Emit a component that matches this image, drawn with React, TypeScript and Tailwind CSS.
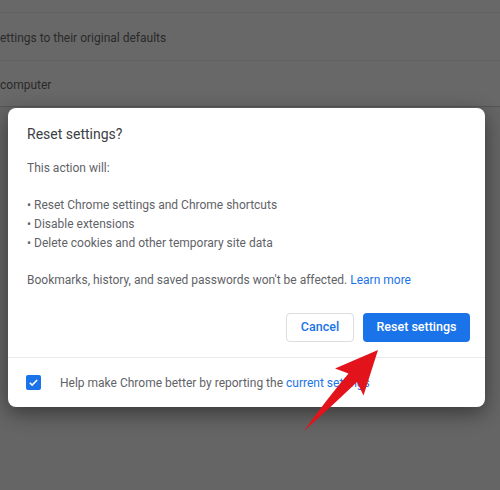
import React from "react";

/**
 * Reset settings dialog over a dimmed settings page
 */
export default function App() {
  return (
    <div
      className="relative w-[500px] h-[490px] overflow-hidden bg-[#656565]"
      style={{ fontFamily: "Roboto, 'Liberation Sans', sans-serif" }}
    >
      {/* Dimmed page behind */}
      <div className="bg-[#686868] border-b border-[#555555] text-[12px] text-[#2a2a2a]">
        <div className="h-[13px] border-b border-[#626262]" />
        <div className="h-[48px] flex items-center border-b border-[#626262] pt-[3px]">
          <span>ettings to their original defaults</span>
        </div>
        <div className="h-[45px] flex items-center pt-[2px]">
          <span>computer</span>
        </div>
      </div>

      {/* Dialog */}
      <div className="absolute left-[8px] top-[108px] w-[477px] bg-white rounded-[8px] shadow-[0_6px_20px_rgba(0,0,0,0.45)]">
        <div className="px-[19px] pt-[16px]">
          <h2 className="text-[14px] leading-[20px] text-[#3c4043]">Reset settings?</h2>
          <div className="mt-[15px] text-[12px] leading-[18px] text-[#5f6368]">
            <p>This action will:</p>
            <ul className="mt-[19px] space-y-[1px]">
              <li>• Reset Chrome settings and Chrome shortcuts</li>
              <li>• Disable extensions</li>
              <li>• Delete cookies and other temporary site data</li>
            </ul>
            <p className="mt-[19px]">
              Bookmarks, history, and saved passwords won't be affected.{" "}
              <span className="text-[#1a73e8]">Learn more</span>
            </p>
          </div>
          <div className="flex justify-end gap-[9px] mt-[24px] pb-[15px]">
            <button className="h-[29px] w-[68px] rounded-[4px] border border-[#dadce0] text-[12.5px] font-medium text-[#1a73e8]">
              Cancel
            </button>
            <button className="h-[29px] w-[107px] -mr-[4px] rounded-[4px] bg-[#1a73e8] text-[12.5px] font-medium text-white">
              Reset settings
            </button>
          </div>
        </div>
        <div className="border-t border-[#e8eaed] h-[50px] flex items-center px-[18px]">
          <span className="w-[15px] h-[15px] rounded-[2px] bg-[#1a73e8] flex items-center justify-center">
            <svg width="11" height="11" viewBox="0 0 24 24" fill="none" stroke="white" strokeWidth="3.5">
              <path d="M4 12.5l5 5L20 6.5" />
            </svg>
          </span>
          <span className="ml-[19px] text-[12px] text-[#5f6368]">
            Help make Chrome better by reporting the{" "}
            <span className="text-[#1a73e8]">current settings</span>
          </span>
        </div>
      </div>

      {/* Red arrow annotation */}
      <svg className="absolute left-0 top-0" width="500" height="490" viewBox="0 0 500 490">
        <path
          d="M378 350 L335 368.5 L348.5 373.5 Q326 400 304 431 Q332 406 357 382 L363.5 395.5 Z"
          fill="#e3131b"
        />
      </svg>
    </div>
  );
}
